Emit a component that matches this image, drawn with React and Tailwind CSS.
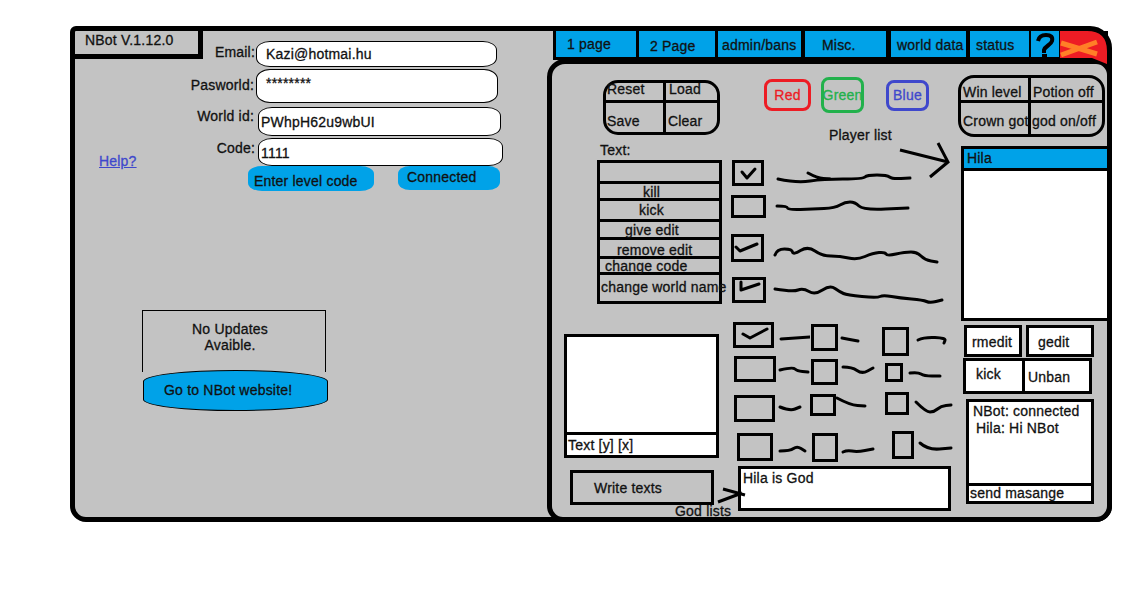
import React from 'react';

const tabs = [
  { label: '1 page', cls: 'w-[80px] pl-[11px] pb-[1px]' },
  { label: '2 Page', cls: 'w-[76px] pl-[11px] pt-[3px]' },
  { label: 'admin/bans', cls: 'w-[83px] pl-[4px] pt-[1px]' },
  { label: 'Misc.', cls: 'ml-[1px] w-[81px] pl-[17px] pt-[1px]' },
  { label: 'world data', cls: 'ml-[2px] w-[75px] pl-[6px] pt-[1px]' },
  { label: 'status', cls: 'ml-[1px] w-[59px] pl-[6px] pt-[1px]' },
];

// Hand drawn lines next to the check boxes, in page coordinates
const bigChecks = [
  {
    row: 'h-[35px] ml-[10px]',
    box: 'w-[32px] h-[26px]',
    vb: '735 163 26 20',
    check: 'M742 172L747 178L755 169',
    line: 'M778 179L797 183L823 179L863 179L867 175L887 175L892 179L910 178M808 173L817 178L830 179',
    lineVb: '764 160 152 35',
  },
  {
    row: 'h-[39px] ml-[9px]',
    box: 'w-[35px] h-[23px]',
    line: 'M777 206L787 206L788 210L813 209L835 208L845 202L855 202L863 210L908 208',
    lineVb: '766 195 150 39',
  },
  {
    row: 'h-[43px] ml-[9px]',
    box: 'w-[33px] h-[28px]',
    vb: '734 237 27 22',
    check: 'M736 247L740 251L757 244',
    line: 'M775 255L777 249L792 249L793 255L808 246L822 256L840 256L857 260L873 253L885 252L887 256L905 252L917 252L925 260L937 262',
    lineVb: '764 234 180 43',
  },
  {
    row: 'h-[45px] ml-[10px]',
    box: 'w-[34px] h-[26px]',
    vb: '735 280 28 20',
    check: 'M741 282L741 290L759 284',
    line: 'M775 289L793 292L803 288L815 295L830 285L840 292L847 295L877 298L883 295L900 298L923 300L930 303L942 300',
    lineVb: '766 277 180 45',
  },
];

const smallChecks = [
  {
    row: 'h-[34px]',
    cells: [
      { col: 'w-[78px]', box: 'ml-[1px] w-[41px] h-[26px]', vb: '736 325 35 20', check: 'M743 334L750 338L767 329', lineVb: '774 322 36 34', line: 'M781 339L810 337' },
      { col: 'w-[71px]', box: 'ml-[1px] w-[27px] h-[27px] mt-[2px]', lineVb: '838 322 42 34', line: 'M842 338L847 339L858 341' },
      { col: 'w-[77px]', box: 'ml-[1px] w-[27px] h-[29px] mt-[5px]', lineVb: '908 322 42 34', line: 'M917 340L923 337L945 338L943 343' },
    ],
  },
  {
    row: 'h-[36px]',
    cells: [
      { col: 'w-[78px]', box: 'ml-[2px] w-[42px] h-[26px]', lineVb: '776 356 34 36', line: 'M780 370L793 367L797 371L808 372' },
      { col: 'w-[71px]', box: 'ml-[1px] w-[27px] h-[26px] mt-[3px]', lineVb: '838 356 42 36', line: 'M843 367L852 367L862 374L873 368' },
      { col: 'w-[77px]', box: 'ml-[4px] w-[18px] h-[19px] mt-[7px]', lineVb: '902 356 42 36', line: 'M909 373L917 372L923 376L939 376' },
    ],
  },
  {
    row: 'h-[39px]',
    cells: [
      { col: 'w-[78px]', box: 'ml-[2px] w-[41px] h-[27px] mt-[3px]', lineVb: '775 392 35 39', line: 'M780 407L790 411L800 407' },
      { col: 'w-[71px]', box: 'w-[26px] h-[22px] mt-[2px]', lineVb: '836 392 36 39', line: 'M837 398L850 405L865 406' },
      { col: 'w-[77px]', box: 'ml-[4px] w-[24px] h-[23px]', lineVb: '908 392 44 39', line: 'M915 402L925 412L933 412L940 406L950 405' },
    ],
  },
  {
    row: 'h-[35px]',
    cells: [
      { col: 'w-[78px]', box: 'ml-[5px] w-[36px] h-[28px] mt-[2px]', lineVb: '773 431 36 35', line: 'M780 451L790 451L797 446L805 451' },
      { col: 'w-[71px]', box: 'ml-[2px] w-[26px] h-[29px] mt-[2px]', lineVb: '838 431 40 35', line: 'M843 452L847 450L857 452L873 449' },
      { col: 'w-[77px]', box: 'ml-[11px] w-[22px] h-[28px]', lineVb: '913 431 40 35', line: 'M919 443L927 450L950 448' },
    ],
  },
];

const commands = [
  { label: '', cls: 'h-[21px]' },
  { label: 'kill', cls: 'h-[17px] pl-[43px] pt-[2px]' },
  { label: 'kick', cls: 'h-[21px] pl-[41px] -mx-[2px]' },
  { label: 'give edit', cls: 'h-[18px] pl-[25px]' },
  { label: 'remove edit', cls: 'h-[19px] pl-[17px] pt-[4px]' },
  { label: 'change code', cls: 'h-[16px] pl-[5px] pt-[1px] -mr-[2px]' },
  { label: 'change world name', cls: 'h-[26px] pl-[1px] whitespace-nowrap pb-[2px]' },
];

// Rounds a polyline off through the midpoints of its segments, so it reads as pen strokes
const smooth = (d) =>
  d
    .split('M')
    .filter(Boolean)
    .map((part) => {
      const pts = part.split('L').map((p) => p.split(' ').map(Number));
      let out = `M${pts[0][0]} ${pts[0][1]}`;
      for (let i = 1; i < pts.length - 1; i++) {
        const mx = (pts[i][0] + pts[i + 1][0]) / 2;
        const my = (pts[i][1] + pts[i + 1][1]) / 2;
        out += `Q${pts[i][0]} ${pts[i][1]} ${mx} ${my}`;
      }
      const last = pts[pts.length - 1];
      return `${out}L${last[0]} ${last[1]}`;
    })
    .join('');

const Scribble = ({ vb, d }) => {
  const [, , w, h] = vb.split(' ').map(Number);
  return (
    <svg width={w} height={h} viewBox={vb} className="shrink-0 block" fill="none">
      <path d={d} stroke="#000" strokeWidth={3} strokeLinejoin="round" strokeLinecap="round" />
    </svg>
  );
};

const CheckBox = ({ box, vb, check }) => (
  <div className={`box-border border-[3px] border-black shrink-0 flex items-center justify-center ${box}`}>
    {check && <Scribble vb={vb} d={check} />}
  </div>
);

const App = () => {
  return (
    <div className="w-[1138px] h-[611px] bg-white pt-[26px] pl-[70px] font-['Liberation_Sans',Arial,sans-serif] text-[14px] leading-[16px] text-[#111] tracking-[0.2px] [-webkit-text-stroke:0.3px_#111] overflow-hidden">
      <div className="box-border w-[1042px] h-[496px] border-[5px] border-black rounded-tl-[6px] rounded-tr-[22px] rounded-b-[16px] bg-[#c3c3c3] flex">
        {/* Login side */}
        <div className="w-[472px] shrink-0">
          <div className="flex">
            <div className="w-[110px] shrink-0">
              <div className="box-border -ml-[3px] -mt-[3px] w-[131px] h-[31px] border-r-[5px] border-b-[5px] border-black pl-[13px] pt-[4px]">
                <div className="w-[110px] whitespace-nowrap">NBot V.1.12.0</div>
              </div>
              <a href="#help" className="block ml-[24px] mt-[94px] text-[#3f48cc] underline [-webkit-text-stroke:0.3px_#3f48cc]">Help?</a>
            </div>
            <div className="w-[320px] pt-[10px]">
              <div className="flex h-[28px]">
                <div className="w-[70px] text-right pt-[3px]">Email:</div>
                <div className="box-border ml-[1px] w-[241px] h-[26px] bg-white border border-black rounded-[14px/9px] pl-[9px] pt-[4px]">Kazi@hotmai.hu</div>
              </div>
              <div className="flex h-[38px]">
                <div className="w-[69px] text-right pt-[8px]">Pasworld:</div>
                <div className="box-border ml-[2px] w-[242px] h-[34px] bg-white border border-black rounded-[14px/10px] pl-[9px] pt-[5px]">********</div>
              </div>
              <div className="flex h-[31px]">
                <div className="w-[69px] text-right pt-[1px]">World id:</div>
                <div className="box-border ml-[4px] w-[243px] h-[29px] bg-white border border-black rounded-[14px/9px] pl-[2px] pt-[6px]">PWhpH62u9wbUI</div>
              </div>
              <div className="flex h-[28px]">
                <div className="w-[70px] text-right pt-[2px]">Code:</div>
                <div className="box-border ml-[3px] w-[245px] h-[28px] bg-white border border-black rounded-[14px/9px] pl-[2px] pt-[6px]">1111</div>
              </div>
              <div className="flex">
                <div className="ml-[63px] w-[126px] h-[25px] bg-[#00a2e8] rounded-[14px/8px] pl-[6px] pt-[7px]">Enter level code</div>
                <div className="ml-[24px] w-[102px] h-[24px] bg-[#00a2e8] rounded-[12px/8px] pl-[9px] pt-[3px]">Connected</div>
              </div>
            </div>
          </div>

          <div className="ml-[67px] mt-[119px] w-[186px]">
            <div className="box-border w-[184px] h-[62px] border-t border-l border-r border-black text-center pt-[10px] pr-[8px]">
              No Updates<br />Avaible.
            </div>
            <div className="box-border -mt-[2px] ml-[1px] w-[185px] h-[41px] bg-[#00a2e8] border border-black rounded-[50%/28%] pl-[20px] pt-[11px] whitespace-nowrap">
              Go to NBot website!
            </div>
          </div>
        </div>

        {/* Bot side */}
        <div className="w-[560px] shrink-0">
          <div className="flex items-start h-[29px] ml-[6px] w-[555px] bg-black gap-[3px] pl-[3px]">
            {tabs.map((tab) => (
              <div key={tab.label} className={`box-border shrink-0 h-[26px] bg-[#00a2e8] flex items-center whitespace-nowrap ${tab.cls}`}>
                {tab.label}
              </div>
            ))}
            <div className="relative z-10 -ml-[1px] w-[28px] h-[26px] shrink-0 bg-[#00a2e8]">
              <svg width="29" height="30" viewBox="1032 31 29 30" className="absolute left-0 top-0" fill="none">
                <path d="M1039 41C1040 36 1043 35 1047 35C1052 35 1054 37 1053 41C1052 45 1046 46 1045 50L1045 53" stroke="#000" strokeWidth="4" />
                <path d="M1043 56L1048 56" stroke="#000" strokeWidth="4" />
              </svg>
            </div>
            <div className="relative z-10 -ml-[2px] w-[47px] h-[26px] shrink-0">
              <svg width="47" height="34" viewBox="0 0 47 34" className="absolute left-0 top-0" fill="none">
                <path d="M0 0L27 0Q47 0 47 20L47 33L32 27L0 27Z" fill="#ed1c24" />
                <path d="M1 12L37 23M1 24L37 11" stroke="#ff7f27" strokeWidth="5" />
              </svg>
            </div>
          </div>

          <div className="relative box-border flex w-[565px] h-[463px] -mt-[1px] -mr-[5px] border-[5px] border-black rounded-tl-[18px] rounded-tr-[16px] rounded-b-[16px] bg-[#c3c3c3]">
            {/* Editor column */}
            <div className="w-[170px] shrink-0">
              <div className="box-border ml-[51px] mt-[16px] w-[117px] h-[55px] border-[3px] border-black rounded-[15px] grid grid-cols-[60px_1fr] grid-rows-[20px_1fr]">
                <div className="border-r-[3px] border-b-[3px] border-black pl-[1px] -mt-[2px]">Reset</div>
                <div className="border-b-[3px] border-black pl-[3px] -mt-[2px]">Load</div>
                <div className="border-r-[3px] border-black pl-[1px] pt-[10px]">Save</div>
                <div className="pl-[2px] pt-[10px]">Clear</div>
              </div>
              <div className="ml-[48px] mt-[7px] h-[18px]">Text:</div>
              <div className="box-border ml-[45px] w-[125px] h-[144px] border-[3px] border-black flex flex-col">
                {commands.map((c, i) => (
                  <div
                    key={c.label}
                    className={`box-border shrink-0 flex items-center leading-none ${i < 6 ? 'border-b-[3px] border-black' : ''} ${c.cls}`}
                  >
                    {c.label}
                  </div>
                ))}
              </div>
              <div className="box-border ml-[12px] mt-[30px] w-[155px] h-[124px] border-[3px] border-black bg-white flex flex-col">
                <div className="h-[98px] border-b-[3px] border-black"></div>
                <div className="pl-[1px] pt-[2px]">Text [y] [x]</div>
              </div>
              <div className="box-border ml-[18px] mt-[12px] w-[144px] h-[35px] border-[3px] border-black pl-[21px] pt-[7px]">Write texts</div>
            </div>

            {/* Colours and check boxes */}
            <div className="w-[236px] shrink-0">
              <div className="flex items-center mt-[13px] h-[36px] ml-[42px]">
                <div className="box-border w-[47px] h-[32px] border-[3px] border-[#ed1c24] rounded-[8px] text-[#ed1c24] [-webkit-text-stroke:0.3px_#ed1c24] flex items-center justify-center">Red</div>
                <div className="box-border ml-[10px] w-[43px] h-[36px] border-[3px] border-[#22b14c] rounded-[8px] text-[#22b14c] [-webkit-text-stroke:0.3px_#22b14c] flex items-center justify-center overflow-hidden">Green</div>
                <div className="box-border ml-[22px] w-[43px] h-[31px] border-[3px] border-[#3f48cc] rounded-[8px] text-[#3f48cc] [-webkit-text-stroke:0.3px_#3f48cc] flex items-center justify-center">Blue</div>
              </div>
              <div className="ml-[107px] mt-[15px] h-[15px] leading-[15px]">Player list</div>
              <div className="mt-[17px]">
                {bigChecks.map((c) => (
                  <div key={c.lineVb} className={`flex items-start ${c.row}`}>
                    <CheckBox box={c.box} vb={c.vb} check={c.check} />
                    <Scribble vb={c.lineVb} d={smooth(c.line)} />
                  </div>
                ))}
              </div>
              <div className="ml-[10px]">
                {smallChecks.map((r) => (
                  <div key={r.row} className={`flex items-start ${r.row}`}>
                    {r.cells.map((c) => (
                      <div key={c.lineVb} className={`flex items-start shrink-0 ${c.col}`}>
                        <CheckBox box={c.box} vb={c.vb} check={c.check} />
                        <Scribble vb={c.lineVb} d={smooth(c.line)} />
                      </div>
                    ))}
                  </div>
                ))}
              </div>
              <div className="box-border ml-[16px] w-[213px] h-[45px] border-[3px] border-black bg-white pl-[2px] pt-[1px]">Hila is God</div>
            </div>

            {/* Players and chat */}
            <div className="w-[149px] shrink-0">
              <div className="box-border mt-[11px] w-[147px] h-[62px] border-[3px] border-black rounded-[16px] grid grid-cols-[70px_1fr] grid-rows-[25px_1fr] whitespace-nowrap">
                <div className="border-r-[3px] border-b-[3px] border-black pl-[2px] pt-[6px]">Win level</div>
                <div className="border-b-[3px] border-black pl-[2px] pt-[6px]">Potion off</div>
                <div className="border-r-[3px] border-black pl-[2px] pt-[10px]">Crown got</div>
                <div className="pl-[1px] pt-[10px]">god on/off</div>
              </div>
              <div className="box-border ml-[3px] mt-[9px] w-[146px] h-[175px] border-[3px] border-r-0 border-black bg-white">
                <div className="box-border h-[22px] bg-[#00a2e8] border-b-[3px] border-black pl-[3px] pt-[1px]">Hila</div>
              </div>
              <div className="flex ml-[6px] mt-[4px]">
                <div className="box-border w-[58px] h-[32px] border-[3px] border-black bg-white pl-[5px] pt-[6px]">rmedit</div>
                <div className="box-border ml-[4px] w-[68px] h-[32px] border-[3px] border-black bg-white pl-[9px] pt-[6px]">gedit</div>
              </div>
              <div className="flex ml-[5px] mt-[1px]">
                <div className="box-border w-[62px] h-[36px] border-[3px] border-black bg-white pl-[10px] pt-[5px]">kick</div>
                <div className="box-border w-[67px] h-[36px] border-[3px] border-l-0 border-black bg-white pl-[3px] pt-[8px]">Unban</div>
              </div>
              <div className="box-border ml-[8px] mt-[5px] w-[128px] h-[105px] border-[3px] border-black bg-white flex flex-col">
                <div className="h-[85px] border-b-[3px] border-black pl-[4px] pt-[1px] whitespace-nowrap">
                  NBot: connected
                  <div className="pl-[3px] pt-[1px]">Hila: Hi NBot</div>
                </div>
                <div className="pl-[1px] leading-[15px] whitespace-nowrap">send masange</div>
              </div>
            </div>

            {/* Arrows and the god list label lie over the rest */}
            <svg width="60" height="40" viewBox="895 140 60 40" className="absolute left-[343px] top-[76px]" fill="none">
              <path d="M900 150L948 162M938 143L948 162L930 177" stroke="#000" strokeWidth="3" />
            </svg>
            <svg width="32" height="18" viewBox="716 487 32 18" className="absolute left-[164px] top-[423px]" fill="none">
              <path d="M718 502L742 493M723 489L745 495" stroke="#000" strokeWidth="3" />
            </svg>
            <div className="absolute left-[123px] top-[439px] whitespace-nowrap">God lists</div>
          </div>
        </div>
      </div>
    </div>
  );
};

export default App;
